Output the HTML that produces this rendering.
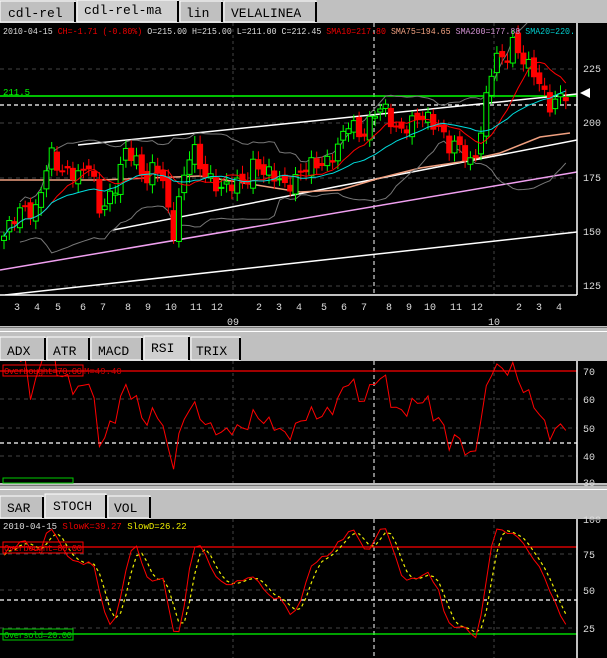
<!DOCTYPE html>
<html><head><meta charset="utf-8">
<style>
body{margin:0;width:607px;height:658px;background:#c0c0c0;overflow:hidden;font-family:"Liberation Mono",monospace}
svg{position:absolute;left:0;top:0}
</style></head><body>
<svg id="s" width="607" height="658" xmlns="http://www.w3.org/2000/svg" font-family="Liberation Mono, monospace">
<defs>
<clipPath id="c1"><rect x="0" y="23" width="577" height="272"/></clipPath>
<clipPath id="c2"><rect x="0" y="361" width="577" height="122"/></clipPath>
<clipPath id="c3"><rect x="0" y="519" width="577" height="139"/></clipPath>
</defs>
<rect width="607" height="658" fill="#c0c0c0"/>
<g font-size="13" fill="#000">
<rect x="0" y="1" width="75" height="21" fill="#c0c0c0" stroke="#fff"/><line x1="75" y1="2" x2="75" y2="22" stroke="#000" stroke-width="2"/><text x="8" y="17">cdl-rel</text>
<rect x="77" y="0" width="101" height="22" fill="#d0d0d0" stroke="#fff"/><line x1="178" y1="1" x2="178" y2="22" stroke="#000" stroke-width="2"/><text x="84" y="14">cdl-rel-ma</text>
<rect x="180" y="1" width="42" height="21" fill="#c0c0c0" stroke="#fff"/><line x1="222" y1="2" x2="222" y2="22" stroke="#000" stroke-width="2"/><text x="186" y="17">lin</text>
<rect x="224" y="1" width="92" height="21" fill="#c0c0c0" stroke="#fff"/><line x1="316" y1="2" x2="316" y2="22" stroke="#000" stroke-width="2"/><text x="231" y="17">VELALINEA</text>
</g>
<rect x="0" y="23" width="607" height="303" fill="#000"/>
<line x1="0" y1="327.5" x2="607" y2="327.5" stroke="#777"/>
<line x1="0" y1="331.5" x2="607" y2="331.5" stroke="#fff"/>
<g font-size="13" fill="#000">
<rect x="0" y="337" width="45" height="23" fill="#c0c0c0" stroke="#fff"/><line x1="45" y1="338" x2="45" y2="360" stroke="#000" stroke-width="2"/><text x="7" y="355">ADX</text>
<rect x="47" y="337" width="42" height="23" fill="#c0c0c0" stroke="#fff"/><line x1="89" y1="338" x2="89" y2="360" stroke="#000" stroke-width="2"/><text x="53" y="355">ATR</text>
<rect x="91" y="337" width="51" height="23" fill="#c0c0c0" stroke="#fff"/><line x1="142" y1="338" x2="142" y2="360" stroke="#000" stroke-width="2"/><text x="98" y="355">MACD</text>
<rect x="144" y="336" width="45" height="24" fill="#d0d0d0" stroke="#fff"/><line x1="189" y1="337" x2="189" y2="360" stroke="#000" stroke-width="2"/><text x="151" y="352">RSI</text>
<rect x="191" y="337" width="49" height="23" fill="#c0c0c0" stroke="#fff"/><line x1="240" y1="338" x2="240" y2="360" stroke="#000" stroke-width="2"/><text x="196" y="355">TRIX</text>
</g>
<rect x="0" y="361" width="607" height="122" fill="#000"/>
<line x1="0" y1="485.5" x2="607" y2="485.5" stroke="#777"/>
<line x1="0" y1="489.5" x2="607" y2="489.5" stroke="#fff"/>
<g font-size="13" fill="#000">
<rect x="0" y="496" width="43" height="22" fill="#c0c0c0" stroke="#fff"/><line x1="43" y1="497" x2="43" y2="518" stroke="#000" stroke-width="2"/><text x="7" y="512">SAR</text>
<rect x="45" y="494" width="61" height="24" fill="#d0d0d0" stroke="#fff"/><line x1="106" y1="495" x2="106" y2="518" stroke="#000" stroke-width="2"/><text x="53" y="510">STOCH</text>
<rect x="108" y="496" width="42" height="22" fill="#c0c0c0" stroke="#fff"/><line x1="150" y1="497" x2="150" y2="518" stroke="#000" stroke-width="2"/><text x="114" y="512">VOL</text>
</g>
<rect x="0" y="519" width="607" height="139" fill="#000"/>
<g id="d1" clip-path="url(#c1)"></g>
<g id="d2" clip-path="url(#c2)"></g>
<g id="d3" clip-path="url(#c3)"></g>
<g stroke="#fff" stroke-width="1.5">
<line x1="577" y1="23" x2="577" y2="295"/><line x1="0" y1="295" x2="577" y2="295"/>
<line x1="577" y1="361" x2="577" y2="483"/>
<line x1="577" y1="519" x2="577" y2="658"/>
</g>
<g font-size="10" fill="#ddd">
<text x="583" y="72">225</text><text x="583" y="126">200</text><text x="583" y="181">175</text><text x="583" y="235">150</text><text x="583" y="289">125</text>
<text x="583" y="375">70</text><text x="583" y="403">60</text><text x="583" y="432">50</text><text x="583" y="460">40</text><text x="583" y="486">30</text>
<text x="583" y="523">100</text><text x="583" y="558">75</text><text x="583" y="594">50</text><text x="583" y="632">25</text>
<text x="14" y="310">3</text><text x="34" y="310">4</text><text x="55" y="310">5</text><text x="80" y="310">6</text><text x="100" y="310">7</text><text x="125" y="310">8</text><text x="145" y="310">9</text><text x="165" y="310">10</text><text x="190" y="310">11</text><text x="211" y="310">12</text>
<text x="256" y="310">2</text><text x="276" y="310">3</text><text x="296" y="310">4</text><text x="321" y="310">5</text><text x="341" y="310">6</text><text x="361" y="310">7</text><text x="386" y="310">8</text><text x="406" y="310">9</text><text x="424" y="310">10</text><text x="450" y="310">11</text><text x="471" y="310">12</text>
<text x="516" y="310">2</text><text x="536" y="310">3</text><text x="556" y="310">4</text>
<text x="227" y="325">09</text><text x="488" y="325">10</text>
</g>
<g font-size="9">
<text x="3" y="34" fill="#ddd" textLength="572" lengthAdjust="spacingAndGlyphs">2010-04-15 <tspan fill="#e00">CH=-1.71 (-0.80%)</tspan> O=215.00 H=215.00 L=211.00 C=212.45 <tspan fill="#e00">SMA10=217.80</tspan> <tspan fill="#f0a080">SMA75=194.65</tspan> <tspan fill="#d090d0">SMA200=177.88</tspan> <tspan fill="#0cc">SMA20=220.</tspan></text>
<text x="3" y="95" fill="#0f0">211.5</text>
<text x="3" y="529" fill="#ddd">2010-04-15 <tspan fill="#e00">SlowK=39.27</tspan> <tspan fill="#ee0">SlowD=26.22</tspan></text>
<rect x="3" y="365" width="80" height="11" fill="none" stroke="#f00"/><text x="4" y="374" fill="#e00" textLength="78">Overbought=70.00</text><text x="84" y="374" fill="#c00">M=49.40</text>
<rect x="3" y="478" width="70" height="5" fill="none" stroke="#0c0"/>
<rect x="3" y="542" width="80" height="11" fill="none" stroke="#f00"/><text x="4" y="551" fill="#e00" textLength="78">Overbought=80.00</text>
<rect x="3" y="629" width="70" height="11" fill="none" stroke="#0c0"/><text x="4" y="638" fill="#0c0" textLength="68">Oversold=20.00</text>
</g>
<polygon points="580,93 590,88 590,98" fill="#fff"/>
</svg>
<script>
(function(){
var h='';
function P(p){return 69+(225-p)*2.17}
function L(x1,y1,x2,y2,c,w,d){h+='<line x1="'+x1+'" y1="'+y1+'" x2="'+x2+'" y2="'+y2+'" stroke="'+c+'" stroke-width="'+(w||1)+'"'+(d?' stroke-dasharray="'+d+'"':'')+'/>';}
function PL(pts,c,w,d){h+='<polyline fill="none" points="'+pts.map(function(p){return p[0].toFixed(1)+','+p[1].toFixed(1)}).join(' ')+'" stroke="'+c+'" stroke-width="'+(w||1)+'"'+(d?' stroke-dasharray="'+d+'"':'')+'/>';}
function flush(id){document.getElementById(id).innerHTML=h;h='';}
[69,123,178,232,286].forEach(function(y){L(0,y,577,y,'#444',1,'4,4')});
L(233,23,233,295,'#444',1,'3,3');L(494,23,494,295,'#444',1,'3,3');L(374,23,374,295,'#fff',1,'4,3');
L(0,105,577,105,'#fff',1.2,'4,3');
L(0,96,577,96,'#0f0',1.5);
L(5,295,577,232,'#fff',1.5);
L(113,230,577,140,'#fff',1.5);
L(78,145,577,94,'#fff',1.5);
L(0,270,577,172,'#f0a0f0',1.5);
PL([[0,180],[100,180],[200,176],[300,192],[340,190],[380,178],[420,168],[460,162],[500,153],[540,137],[570,133]],'#f0a080',1.5);
var K=[[4,148],[15,155],[25,162],[35,160],[45,175],[50,185],[60,178],[70,180],[80,175],[90,180],[100,160],[105,165],[115,170],[125,185],[135,185],[145,175],[155,180],[165,170],[172,145],[178,165],[185,178],[192,190],[200,178],[210,175],[220,172],[230,170],[245,172],[255,185],[262,178],[270,175],[285,172],[300,177],[315,180],[330,185],[340,190],[350,200],[360,195],[375,205],[385,205],[395,198],[410,200],[425,202],[440,200],[450,188],[460,188],[470,182],[478,190],[485,208],[495,230],[505,228],[512,240],[520,232],[528,225],[540,218],[550,210],[560,212],[570,211]];
function I(x){for(var i=1;i<K.length;i++)if(x<=K[i][0]){var a=K[i-1],b=K[i];return a[1]+(b[1]-a[1])*(x-a[0])/(b[0]-a[0]);}return K[K.length-1][1];}
var C=[],O=[],H=[],Lo=[],X=[];
for(var i=0;;i++){var x=4+i*5.3;if(x>570)break;X.push(x);var c=I(x)+3*Math.sin(i*2.3)+2*Math.sin(i*0.9);var o=i?C[i-1]+2*Math.sin(i*1.7):c-2;C.push(c);O.push(o);H.push(Math.max(o,c)+2+2*Math.abs(Math.sin(i*3.1)));Lo.push(Math.min(o,c)-2-2*Math.abs(Math.cos(i*2.7)));}
var n=C.length;
function sma(a,p,i){var s=0,k=0;for(var j=Math.max(0,i-p+1);j<=i;j++){s+=a[j];k++}return s/k}
var s10=[],s20=[],bu=[],bl=[];
for(i=0;i<n;i++){var m=sma(C,20,i),v=0,k=0;for(var j=Math.max(0,i-19);j<=i;j++){v+=(C[j]-m)*(C[j]-m);k++}var sd=Math.sqrt(v/k);s20.push([X[i],P(m)]);s10.push([X[i],P(sma(C,10,i))]);if(i>=3){bu.push([X[i],P(m+2*sd)]);bl.push([X[i],P(m-2*sd)]);}}
PL(bu,'#777');PL(bl,'#777');
for(i=0;i<n;i++){var x=X[i],up=C[i]>=O[i],col=up?'#0f0':'#f00';L(x,P(H[i]),x,P(Lo[i]),col);var t=P(Math.max(O[i],C[i])),bh=Math.max(1,P(Math.min(O[i],C[i]))-t);h+='<rect x="'+(x-2.5)+'" y="'+t+'" width="5" height="'+bh+'" fill="'+(up?'#000':'#f00')+'" stroke="'+col+'"/>';}
PL(s10,'#f00');PL(s20,'#0dd');
flush('d1');
[399,428,456].forEach(function(y){L(0,y,577,y,'#444',1,'4,4')});
L(233,361,233,483,'#444',1,'3,3');L(494,361,494,483,'#444',1,'3,3');L(374,361,374,483,'#fff',1,'4,3');
L(0,371,577,371,'#f00',1.2);L(0,443,577,443,'#fff',1.2,'4,3');
var r=[],ag=0.5,al=0.5;
for(i=1;i<n;i++){var d=C[i]-C[i-1];ag=(ag*13+Math.max(d,0))/14;al=(al*13+Math.max(-d,0))/14;var rv=100-100/(1+ag/(al||1e-6));if(i>=3)r.push([X[i],371+(70-rv)*2.87]);}
PL(r,'#f00');
flush('d2');
[554,590,628].forEach(function(y){L(0,y,577,y,'#444',1,'4,4')});
L(233,519,233,658,'#444',1,'3,3');L(494,519,494,658,'#444',1,'3,3');L(374,519,374,658,'#fff',1,'4,3');
L(0,547,577,547,'#f00',1.2);L(0,634,577,634,'#0f0',1.2);L(0,600,577,600,'#fff',1.2,'4,3');
var fk=[];for(i=0;i<n;i++){var hh=-1e9,ll=1e9;for(j=Math.max(0,i-13);j<=i;j++){hh=Math.max(hh,H[j]);ll=Math.min(ll,Lo[j])}fk.push(100*(C[i]-ll)/(hh-ll))}
var sk=[],sdv=[],ka=[];for(i=0;i<n;i++)ka.push(sma(fk,3,i));
for(i=0;i<n;i++){sk.push([X[i],519+(100-ka[i])*1.44]);sdv.push([X[i],519+(100-sma(ka,3,i))*1.44]);}
PL(sdv,'#ee0',1.2,'3,3');PL(sk,'#f00');
flush('d3');
})();
</script>
</body></html>
